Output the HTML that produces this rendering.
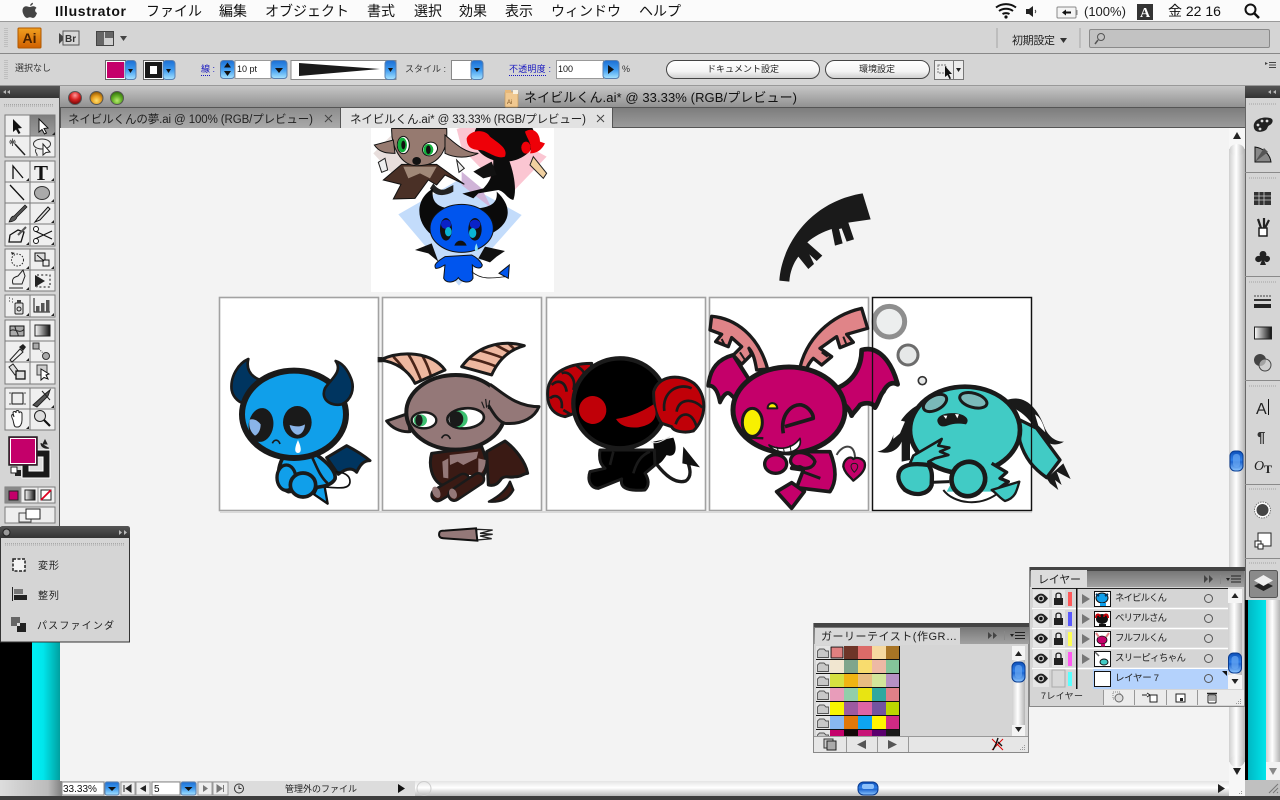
<!DOCTYPE html>
<html><head><meta charset="utf-8"><title>Illustrator</title>
<style>
html,body{margin:0;padding:0;background:#3a3a3a;width:1280px;height:800px;overflow:hidden}
svg{display:block;position:absolute;left:0;top:0}
text{font-family:"Liberation Sans","Noto Sans CJK JP",sans-serif;fill:#222}
.m{font-size:14px;fill:#111}
.s{font-size:9px;fill:#333}
.b{font-size:10px;fill:#222}
.l{font-size:9.5px;fill:#222}
.tool{fill:#efefef;stroke:#7a7a7a;stroke-width:1}
</style></head><body>
<svg width="1280" height="800" viewBox="0 0 1280 800" xmlns="http://www.w3.org/2000/svg">
<defs>
<linearGradient id="title" x1="0" y1="0" x2="0" y2="1"><stop offset="0" stop-color="#c6c6c6"/><stop offset="1" stop-color="#8f8f8f"/></linearGradient>
<linearGradient id="tabg" x1="0" y1="0" x2="0" y2="1"><stop offset="0" stop-color="#7d7d7d"/><stop offset="1" stop-color="#9c9c9c"/></linearGradient>
<linearGradient id="tabin" x1="0" y1="0" x2="0" y2="1"><stop offset="0" stop-color="#8d8d8d"/><stop offset="1" stop-color="#aaa"/></linearGradient>
<linearGradient id="dark" x1="0" y1="0" x2="0" y2="1"><stop offset="0" stop-color="#555"/><stop offset="1" stop-color="#333"/></linearGradient>
<linearGradient id="blue" x1="0" y1="0" x2="0" y2="1"><stop offset="0" stop-color="#1c6fd4"/><stop offset=".5" stop-color="#3f9bf0"/><stop offset="1" stop-color="#a8e4ff"/></linearGradient>
<linearGradient id="knob" x1="0" y1="0" x2="0" y2="1"><stop offset="0" stop-color="#0c4fb8"/><stop offset=".45" stop-color="#2f7fe8"/><stop offset=".55" stop-color="#1e66d0"/><stop offset="1" stop-color="#8cc6ff"/></linearGradient>
<linearGradient id="sv" x1="0" y1="0" x2="1" y2="0"><stop offset="0" stop-color="#cfcfcf"/><stop offset=".45" stop-color="#fff"/><stop offset="1" stop-color="#b4b4b4"/></linearGradient>
<linearGradient id="sh" x1="0" y1="0" x2="0" y2="1"><stop offset="0" stop-color="#e4e4e4"/><stop offset=".45" stop-color="#fff"/><stop offset="1" stop-color="#bbb"/></linearGradient>
<linearGradient id="cy" x1="0" y1="0" x2="1" y2="0"><stop offset="0" stop-color="#00f0f4"/><stop offset=".4" stop-color="#00e6ec"/><stop offset="1" stop-color="#00a0a0"/></linearGradient>
<linearGradient id="cy2" x1="0" y1="0" x2="1" y2="0"><stop offset="0" stop-color="#00b8c4"/><stop offset="1" stop-color="#00e4ea"/></linearGradient>
<linearGradient id="st" x1="0" y1="0" x2="1" y2="0"><stop offset="0" stop-color="#ddd"/><stop offset=".8" stop-color="#bbb"/><stop offset="1" stop-color="#888"/></linearGradient>
<linearGradient id="gr" x1="0" y1="0" x2="1" y2="0"><stop offset="0" stop-color="#fff"/><stop offset="1" stop-color="#111"/></linearGradient>
<linearGradient id="pill" x1="0" y1="0" x2="0" y2="1"><stop offset="0" stop-color="#fff"/><stop offset=".6" stop-color="#f4f4f4"/><stop offset="1" stop-color="#cfcfcf"/></linearGradient>
<linearGradient id="aig" x1="0" y1="0" x2="0" y2="1"><stop offset="0" stop-color="#f0a020"/><stop offset="1" stop-color="#d06000"/></linearGradient>
<linearGradient id="lay" x1="0" y1="0" x2="0" y2="1"><stop offset="0" stop-color="#777"/><stop offset="1" stop-color="#a2a2a2"/></linearGradient>
<radialGradient id="red" cx=".5" cy=".3" r=".7"><stop offset="0" stop-color="#ff9a9a"/><stop offset=".5" stop-color="#d82020"/><stop offset="1" stop-color="#6a0808"/></radialGradient>
<radialGradient id="org" cx=".5" cy=".7" r=".7"><stop offset="0" stop-color="#ffe070"/><stop offset=".5" stop-color="#e8a020"/><stop offset="1" stop-color="#885000"/></radialGradient>
<radialGradient id="grn" cx=".5" cy=".7" r=".7"><stop offset="0" stop-color="#b8ec70"/><stop offset=".5" stop-color="#64b028"/><stop offset="1" stop-color="#2c6808"/></radialGradient>
<clipPath id="sw"><rect x="816" y="646" width="196" height="91"/></clipPath>
<clipPath id="thumb"><rect x="371" y="128" width="183" height="164"/></clipPath>
<clipPath id="hl"><path d="M495,195 C560,165 650,170 690,225 L600,265 C580,225 540,200 495,195Z"/></clipPath>
<clipPath id="hr"><path d="M740,215 C780,160 850,130 928,152 C880,165 850,195 830,240Z"/></clipPath>
</defs>

<rect width="1280" height="800" fill="#3a3a3a"/>
<rect x="60" y="128" width="1185" height="653" fill="#f3f3f3"/>

<!-- thumbnail art -->
<g clip-path="url(#thumb)">
<rect x="371" y="128" width="183" height="164" fill="#fff"/>
<g transform="translate(365,125) scale(.3333)">
 <polygon points="25,85 95,15 210,130 140,210" fill="#e8dedc"/>
 <polygon points="275,12 350,-10 545,95 430,215 290,70" fill="#fbc6d2"/>
 <polygon points="100,268 280,165 470,270 282,482" fill="#c3dcfb"/>
 <polygon points="290,140 350,190 380,250 290,180" fill="#d0b4d8"/>
 <!-- goat -->
 <path d="M55,165 L110,118 L215,118 L298,178 L240,150 L215,180 L190,165 L150,220 L85,222 L108,178Z" fill="#4a3026" stroke="#111" stroke-width="3"/>
 <path d="M115,125 L130,160 L165,145 L195,160 L215,125Z" fill="#a08878"/>
 <path d="M40,112 L60,100 L68,135 L50,142Z M275,105 L298,130 L282,142Z" fill="#eee" stroke="#222" stroke-width="3"/>
 <path d="M80,10 C78,60 105,125 160,122 C215,122 250,85 245,10Z" fill="#967a70" stroke="#111" stroke-width="3"/>
 <path d="M85,45 L28,60 C45,85 70,85 90,85Z" fill="#967a70" stroke="#111" stroke-width="3"/>
 <path d="M240,30 C270,55 300,85 340,85 C310,100 270,100 240,85Z" fill="#967a70" stroke="#111" stroke-width="3"/>
 <ellipse cx="115" cy="60" rx="18" ry="26" fill="#fff" stroke="#111" stroke-width="3"/>
 <ellipse cx="112" cy="60" rx="14" ry="22" fill="#12b03c"/><ellipse cx="115" cy="60" rx="6" ry="13" fill="#111"/>
 <ellipse cx="195" cy="72" rx="23" ry="20" fill="#fff" stroke="#111" stroke-width="3" transform="rotate(-25 195 72)"/>
 <ellipse cx="190" cy="74" rx="15" ry="17" fill="#12b03c"/><ellipse cx="190" cy="74" rx="7" ry="13" fill="#111"/>
 <ellipse cx="155" cy="108" rx="13" ry="12" fill="#111"/>
 <path d="M195,190 C210,215 240,215 265,200 L265,180 L245,190 C230,200 215,190 205,175Z" fill="#222"/>
 <!-- belial -->
 <ellipse cx="418" cy="38" rx="92" ry="72" fill="#0c0c0c"/>
 <path d="M385,100 C385,130 385,160 355,190 L292,206 L325,220 L340,205 L400,195 C420,200 425,220 445,225 C455,200 450,150 430,100Z" fill="#0c0c0c"/>
 <path d="M325,140 L380,110 L395,150 L355,160Z" fill="#111"/>
 <path d="M305,40 C315,15 360,10 375,35 C400,55 430,70 420,95 C395,105 365,75 345,75 C320,75 305,65 305,40Z" fill="#ee0008"/>
 <path d="M480,20 C500,5 525,20 525,50 L540,55 C530,75 515,85 495,85 C505,60 485,40 480,20Z" fill="#ee0008"/>
 <ellipse cx="483" cy="68" rx="14" ry="18" fill="#ee0008"/>
 <path d="M505,95 L545,145 L535,160 L495,120Z" fill="#f0d0a0" stroke="#222" stroke-width="3"/>
 <!-- blue -->
 <path d="M205,190 C150,220 150,290 200,330 L370,330 C440,300 445,245 395,200 C400,240 370,255 280,250 C220,255 195,230 205,190Z" fill="#0a0a0a"/>
 <path d="M150,375 L200,355 L220,410 L190,385Z M360,365 L420,378 L395,395 L375,412 L340,400Z" fill="#111"/>
 <path d="M240,395 C215,410 205,420 212,430 C225,432 235,420 240,420 L236,460 C245,478 270,472 280,458 C290,472 315,478 324,460 L322,420 C335,432 350,432 352,420 C345,405 330,395 320,390Z" fill="#0055ee" stroke="#111" stroke-width="3"/>
 <ellipse cx="290" cy="310" rx="95" ry="72" fill="#0055ee" stroke="#111" stroke-width="3"/>
 <ellipse cx="243" cy="313" rx="18" ry="34" fill="#111"/><ellipse cx="330" cy="313" rx="20" ry="34" fill="#111"/>
 <ellipse cx="243" cy="298" rx="15" ry="14" fill="#0a22c8"/><ellipse cx="330" cy="298" rx="16" ry="14" fill="#0a22c8"/>
 <ellipse cx="250" cy="320" rx="10" ry="14" fill="#09b4d4"/><ellipse cx="323" cy="324" rx="11" ry="15" fill="#09b4d4"/>
 <path d="M268,362 C275,342 298,342 305,362Z" fill="#111"/>
 <path d="M334,355 C328,368 328,378 334,378 C340,378 340,368 334,355Z" fill="#8ee0f0"/>
 <path d="M320,440 C350,465 380,460 420,455" fill="none" stroke="#111" stroke-width="2.5"/>
 <path d="M402,445 L433,420 L430,460Z" fill="#0055ee" stroke="#111" stroke-width="3"/>
</g>
</g>

<!-- artboards -->
<g fill="#fff" stroke="#a2a2a2" stroke-width="1.6">
<rect x="219.5" y="297.5" width="159" height="213"/>
<rect x="382.5" y="297.5" width="159" height="213"/>
<rect x="546.5" y="297.5" width="159" height="213"/>
<rect x="709.5" y="297.5" width="159" height="213"/>
<rect x="872.5" y="297.5" width="159" height="213"/>
</g>
<rect x="220" y="511" width="812" height="2" fill="#d8d8d8"/>

<!-- arch -->
<g transform="translate(770,185) scale(.3333)"><path d="M28,287 C35,180 120,50 278,25 L302,103 L235,113 L252,163 L230,170 L215,130 L207,132 L218,175 L195,182 L185,132 C160,140 130,155 112,172 L157,212 L140,228 L118,208 L132,237 L115,252 L85,215 C70,235 60,260 58,290Z" fill="#1a1a1a"/></g>

<!-- char 1 -->
<g transform="translate(215,295) scale(.3333)" stroke-linejoin="round">
 <path d="M335,488 L395,452 C420,465 445,480 465,497 C445,497 435,510 425,532 C410,515 390,522 370,538Z" fill="#003560" stroke="#1a1a1a" stroke-width="9"/>
 <path d="M310,575 C350,575 405,590 405,560 C405,535 375,530 355,530" fill="none" stroke="#111" stroke-width="5"/>
 <path d="M297,598 L338,626 L328,570 L308,575Z" fill="#109fea" stroke="#111" stroke-width="7"/>
 <path d="M205,485 L305,480 C335,500 365,530 360,552 C350,572 320,575 300,578 L220,590 C190,580 180,530 205,485Z" fill="#109fea" stroke="#1a1a1a" stroke-width="11"/>
 <path d="M292,488 C305,515 315,545 338,565" fill="none" stroke="#1a1a1a" stroke-width="8"/>
 <ellipse cx="214" cy="548" rx="28" ry="38" fill="#109fea" stroke="#1a1a1a" stroke-width="10"/>
 <ellipse cx="264" cy="570" rx="38" ry="36" fill="#109fea" stroke="#1a1a1a" stroke-width="11"/>
 <path d="M100,192 C70,205 45,245 50,285 C55,310 75,325 90,325 L135,255 C110,245 92,225 100,192Z" fill="#003560" stroke="#1a1a1a" stroke-width="8"/>
 <ellipse cx="237" cy="358" rx="156" ry="131" fill="#109fea" stroke="#1a1a1a" stroke-width="18"/>
 <path d="M362,198 C385,230 345,255 330,280 C315,315 350,335 380,328 C410,315 420,280 408,250 C398,225 385,205 362,198Z" fill="#003560" stroke="#1a1a1a" stroke-width="8"/>
 <ellipse cx="138" cy="390" rx="37" ry="51" transform="rotate(8 138 390)" fill="#1a1a1a"/>
 <ellipse cx="247" cy="382" rx="43" ry="49" fill="#1a1a1a"/>
 <path d="M104,374 C114,370 128,376 137,388 C137,405 130,417 120,422 C106,412 100,392 104,374Z" fill="#8ab4e8"/>
 <path d="M224,390 C240,394 252,398 270,388 C269,408 257,421 245,419 C233,414 226,402 224,390Z" fill="#8ab4e8"/>
 <path d="M172,445 C178,432 190,432 195,447" fill="none" stroke="#1a1a1a" stroke-width="5"/>
 <path d="M249,435 C240,455 236,473 249,474 C262,473 258,455 249,435Z" fill="#fff"/>
</g>

<!-- char 2 -->
<g transform="translate(215,295) scale(.3333)" stroke-linejoin="round">
 <rect x="488" y="186" width="14" height="16" fill="#222"/>
 <path d="M815,470 L870,438 C900,460 932,500 938,535 C925,535 915,548 900,545 C885,550 875,540 860,550 C850,565 840,575 820,570Z" fill="#3a1a14" stroke="#1a1a1a" stroke-width="9"/>
 <path d="M885,560 C875,585 850,605 822,620 C860,622 880,612 895,585Z" fill="#3a1a14" stroke="#1a1a1a" stroke-width="7"/>
 <path d="M650,475 C640,510 650,555 680,570 L790,560 C825,530 815,490 800,455Z" fill="#3a1a14" stroke="#1a1a1a" stroke-width="9"/>
 <path d="M682,500 L700,490 L700,550 L685,548Z M790,490 L812,495 C812,520 800,535 790,540Z" fill="#947878"/>
 <path d="M704,480 L790,470 L785,490 L765,500 L745,510 L728,500 L705,510Z" fill="#947878"/>
 <path d="M762,542 L812,548 M765,560 L812,560 M762,578 L800,565" stroke="#fff" stroke-width="5"/>
 <path d="M668,600 L745,555" stroke="#1a1a1a" stroke-width="44" stroke-linecap="round"/>
 <path d="M668,600 L745,555" stroke="#3a1a14" stroke-width="29" stroke-linecap="round"/>
 <path d="M718,600 L790,552" stroke="#1a1a1a" stroke-width="42" stroke-linecap="round"/>
 <path d="M718,600 L790,552" stroke="#3a1a14" stroke-width="27" stroke-linecap="round"/>
 <ellipse cx="664" cy="592" rx="11" ry="18" fill="#947878" transform="rotate(-25 664 592)"/><ellipse cx="714" cy="596" rx="11" ry="16" fill="#947878" transform="rotate(-25 714 596)"/>
 <path d="M495,195 C560,165 650,170 690,225 L600,265 C580,225 540,200 495,195Z" fill="#eeb8a0"/>
 <g clip-path="url(#hl)"><path d="M535,185 C550,200 570,225 585,250 M575,170 C595,200 605,225 620,260 M615,170 C630,195 640,215 650,250" fill="none" stroke="#4a2418" stroke-width="8"/></g>
 <path d="M495,195 C560,165 650,170 690,225 L600,265 C580,225 540,200 495,195Z" fill="none" stroke="#1a1a1a" stroke-width="9"/>
 <path d="M740,215 C780,160 850,130 928,152 C880,165 850,195 830,240Z" fill="#eeb8a0"/>
 <g clip-path="url(#hr)"><path d="M760,190 C790,195 820,205 845,215 M790,165 C815,172 845,180 870,192 M835,145 C850,155 870,165 890,175 M880,145 C885,150 895,158 900,165" fill="none" stroke="#4a2418" stroke-width="8"/></g>
 <path d="M740,215 C780,160 850,130 928,152 C880,165 850,195 830,240Z" fill="none" stroke="#1a1a1a" stroke-width="9"/>
 <path d="M515,378 L578,356 L585,410 C555,412 530,398 515,378Z" fill="#947878" stroke="#1a1a1a" stroke-width="9"/>
 <ellipse cx="722" cy="352" rx="148" ry="112" fill="#947878" stroke="#1a1a1a" stroke-width="12"/>
 <path d="M825,268 C860,290 900,335 972,335 C960,365 925,390 870,385 C850,380 835,355 820,330" fill="#947878" stroke="#1a1a1a" stroke-width="9"/>
 <path d="M800,320 L808,340 M812,312 L815,338 M824,316 L820,342" stroke="#1a1a1a" stroke-width="3.5"/>
 <ellipse cx="627" cy="376" rx="37" ry="24" fill="#fff" stroke="#1a1a1a" stroke-width="7"/>
 <ellipse cx="616" cy="376" rx="20" ry="18" fill="#3cc070"/><ellipse cx="612" cy="376" rx="11" ry="17" fill="#1a1a1a"/>
 <ellipse cx="752" cy="370" rx="55" ry="30" transform="rotate(-5 752 370)" fill="#fff" stroke="#1a1a1a" stroke-width="8"/>
 <ellipse cx="734" cy="372" rx="24" ry="25" fill="#3cc070"/><ellipse cx="724" cy="372" rx="21" ry="23" fill="#1a1a1a"/>
 <path d="M680,430 C686,416 700,416 706,432" fill="none" stroke="#1a1a1a" stroke-width="5"/>
</g>

<!-- char 3 -->
<g transform="translate(545,295) scale(.3333)" stroke-linejoin="round">
 <path d="M335,508 C360,540 390,568 422,558 C442,545 435,520 428,500" fill="none" stroke="#1a1a1a" stroke-width="10"/>
 <path d="M415,455 L465,517 L412,505Z" fill="#111"/>
 <path d="M325,440 L385,428 C400,465 390,490 365,480 C355,495 345,510 330,510Z" fill="#0a0a0a"/>
 <path d="M165,465 C160,500 170,510 180,520 L135,530 C125,560 140,580 160,580 L230,552 C225,575 240,590 300,585 C315,570 310,550 300,535 L330,510 L328,465Z" fill="#000" stroke="#1a1a1a" stroke-width="9"/>
 <path d="M195,510 L205,470 M265,535 C275,500 290,480 315,470" fill="none" stroke="#1a1a1a" stroke-width="8"/>
 <path d="M8,300 C5,240 60,205 140,205 L130,340 L60,365 C30,360 8,340 8,300Z" fill="#c00008" stroke="#1a1a1a" stroke-width="9"/>
 <path d="M20,270 C35,255 60,255 65,290 M15,310 C30,295 55,305 50,340 M50,235 C70,225 95,250 85,285 M95,212 C105,220 115,225 120,240 M55,345 L80,360" fill="none" stroke="#1a1a1a" stroke-width="8"/>
 <ellipse cx="225" cy="325" rx="140" ry="135" fill="#000" stroke="#1a1a1a" stroke-width="13"/>
 <path d="M326,290 C340,240 405,235 447,265 C488,300 485,370 445,408 C420,415 385,410 380,395 L350,385 C330,360 325,320 326,290Z" fill="#c00008" stroke="#1a1a1a" stroke-width="9"/>
 <path d="M358,348 C350,290 400,262 440,280 M395,350 C400,310 445,308 472,338 M392,388 C405,345 445,350 455,398" fill="none" stroke="#1a1a1a" stroke-width="8"/>
 <ellipse cx="143" cy="345" rx="41" ry="42" transform="rotate(-15 143 345)" fill="#c00008"/>
 <path d="M213,372 C260,365 300,345 325,328 C340,360 332,388 280,397 C248,400 225,392 213,372Z" fill="#c00008"/>
 <path d="M318,440 C335,450 355,435 375,425" fill="none" stroke="#ddd" stroke-width="3"/>
</g>

<!-- char 4 -->
<g transform="translate(545,295) scale(.3333)" stroke-linejoin="round">
 <path d="M860,285 C930,265 950,210 950,165 C1000,150 1040,200 1058,268 C1040,258 1025,270 1015,290 C1005,300 1002,320 990,338 C985,322 960,322 945,330 C935,345 925,352 920,362 C915,345 905,330 878,315Z" fill="#c4006a" stroke="#1a1a1a" stroke-width="14"/>
 <path d="M490,272 C495,220 520,192 565,180 L615,258 L585,325 C560,305 555,290 545,295 C535,300 530,312 525,322 C520,295 510,270 490,272Z" fill="#c4006a" stroke="#1a1a1a" stroke-width="12"/>
 <path d="M500,64 C570,70 640,120 668,222 L635,225 C630,195 625,175 612,160 L620,178 L590,208 L565,180 L590,155 L560,128 L550,155 L512,140 L530,118 L495,105Z" fill="#e08488" stroke="#1a1a1a" stroke-width="10"/>
 <path d="M950,40 L968,100 L905,118 L925,142 L885,158 L875,125 C860,135 840,150 825,160 L860,185 L830,210 L805,190 C790,205 785,220 780,232 L762,232 C780,130 860,60 950,40Z" fill="#e08488" stroke="#1a1a1a" stroke-width="10"/>
 <path d="M530,132 L540,152 M585,172 L600,195 M895,125 L905,150 M830,172 L848,185" stroke="#1a1a1a" stroke-width="6"/>
 <path d="M770,470 L855,470 C875,520 875,560 855,590 L755,578 L775,525 L740,520Z" fill="#c4006a" stroke="#1a1a1a" stroke-width="11"/>
 <path d="M772,530 L826,550" stroke="#1a1a1a" stroke-width="9"/>
 <ellipse cx="732" cy="345" rx="168" ry="129" fill="#c4006a" stroke="#1a1a1a" stroke-width="15"/>
 <ellipse cx="622" cy="382" rx="30" ry="42" fill="#f8f000" stroke="#1a1a1a" stroke-width="9"/>
 <path d="M595,425 C615,430 635,428 655,430" fill="none" stroke="#1a1a1a" stroke-width="7"/>
 <path d="M668,340 C668,320 695,318 697,340Z" fill="#f8f000" stroke="#1a1a1a" stroke-width="6"/>
 <path d="M715,415 C705,360 740,325 770,330 C790,335 805,355 805,370 L720,395" fill="#c4006a" stroke="#1a1a1a" stroke-width="11"/>
 <path d="M672,450 C700,465 740,465 765,430 C772,460 745,475 715,472 C695,470 680,462 672,450Z" fill="#fff" stroke="#1a1a1a" stroke-width="5"/>
 <path d="M695,455 L700,468 M715,458 L718,472 M735,450 L738,468" stroke="#1a1a1a" stroke-width="3"/>
 <path d="M875,480 C890,450 930,440 930,490" fill="none" stroke="#444" stroke-width="6"/>
 <path d="M925,492 C915,480 895,495 895,515 C900,535 915,545 925,557 C940,545 960,530 960,510 C960,490 935,485 925,492Z" fill="#c4006a" stroke="#1a1a1a" stroke-width="7"/>
 <path d="M928,505 C918,505 912,515 928,532 C945,515 938,505 928,505Z" fill="#c4006a" stroke="#1a1a1a" stroke-width="3"/>
 <path d="M695,590 L740,563 L778,590 L740,640Z" fill="#c4006a" stroke="#1a1a1a" stroke-width="11"/>
 <ellipse cx="692" cy="507" rx="33" ry="28" fill="#c4006a" stroke="#1a1a1a" stroke-width="10"/>
 <path d="M745,480 C760,465 800,475 810,500 C805,520 780,525 765,515 C745,520 725,500 745,480Z" fill="#c4006a" stroke="#1a1a1a" stroke-width="10"/>
</g>

<!-- char 5 -->
<g transform="translate(860,295) scale(.3333)" stroke-linejoin="round">
 <circle cx="88" cy="80" r="46" fill="#eceeee" stroke="#8e8e8e" stroke-width="15"/>
 <circle cx="144" cy="180" r="30" fill="#e6e8e8" stroke="#6c6c6c" stroke-width="9"/>
 <circle cx="187" cy="257" r="12" fill="#e6e8e8" stroke="#333" stroke-width="5"/>
 <path d="M470,370 L530,400 L600,495 L560,548 C520,520 495,490 480,440Z" fill="#41cbc5" stroke="#1a1a1a" stroke-width="10"/>
 <path d="M440,315 C500,295 535,345 555,400 C570,430 590,440 612,440 C590,455 560,450 545,425 L515,385 C500,365 480,345 440,330Z" fill="#1a1a1a"/>
 <path d="M525,358 C540,365 550,385 556,412 L535,392Z" fill="#fff"/>
 <path d="M560,550 L570,565 L595,585 L585,555 L605,570 L590,530 L632,552 L610,505Z" fill="#1a1a1a"/>
 <path d="M185,325 C145,340 115,380 100,420 C90,450 75,465 52,470 C90,480 115,465 125,440 L125,500 L150,495 L150,400Z" fill="#1a1a1a"/>
 <path d="M115,375 C105,395 98,415 100,432 L120,415 L135,380Z" fill="#fff"/>
 <path d="M250,585 C280,625 360,640 420,590" fill="none" stroke="#1a1a1a" stroke-width="6"/>
 <ellipse cx="315" cy="405" rx="165" ry="130" fill="#41cbc5" stroke="#1a1a1a" stroke-width="14"/>
 <path d="M395,505 L440,532 L420,550 L445,560 L400,590 L260,590 L300,515Z" fill="#41cbc5" stroke="none"/>
 <path d="M395,505 L440,532 L420,550 L445,560 L410,585" fill="none" stroke="#1a1a1a" stroke-width="10"/>
 <path d="M160,482 L245,432 L235,452 L268,458 L240,470 L265,480 L225,490 L205,500 L208,515 L150,505Z" fill="#41cbc5" stroke="#1a1a1a" stroke-width="8"/>
 <path d="M118,530 C130,505 170,505 205,510 C220,530 215,550 215,570 C205,600 165,605 135,585 C120,570 110,550 118,530Z" fill="#41cbc5" stroke="#1a1a1a" stroke-width="13"/>
 <path d="M212,562 L268,560" stroke="#1a1a1a" stroke-width="9"/>
 <ellipse cx="325" cy="552" rx="50" ry="52" transform="rotate(30 325 552)" fill="#41cbc5" stroke="#1a1a1a" stroke-width="14"/>
 <path d="M395,585 L478,560 C470,590 465,610 435,618 C420,610 410,595 395,585Z" fill="#41cbc5" stroke="#1a1a1a" stroke-width="7"/>
 <ellipse cx="225" cy="324" rx="38" ry="21" transform="rotate(-28 225 324)" fill="#7ab9b9" stroke="#1a1a1a" stroke-width="9"/>
 <ellipse cx="340" cy="316" rx="42" ry="21" transform="rotate(16 340 316)" fill="#7ab9b9" stroke="#1a1a1a" stroke-width="9"/>
 <path d="M232,378 C232,360 260,352 290,355 C320,360 330,375 318,388 C295,385 280,385 262,392 C245,398 235,392 232,378Z" fill="#1a1a1a"/>
 <path d="M250,362 L258,372 L262,362Z M285,357 L292,370 L297,358Z" fill="#fff"/>
</g>
<rect x="872.5" y="297.5" width="159" height="213" fill="none" stroke="#111" stroke-width="1.3"/>

<!-- small brush -->
<g transform="translate(430,520) scale(.3333)">
 <path d="M140,28 L188,30 L150,40 L188,43 L150,48 L185,56 L140,60Z" fill="#fff" stroke="#222" stroke-width="4"/>
 <path d="M28,38 C30,32 35,32 45,32 L138,25 L142,62 L45,55 C30,55 25,50 28,38Z" fill="#947878" stroke="#111" stroke-width="6"/>
</g>

<!-- menu bar -->
<rect width="1280" height="22" fill="#fbfbfb"/>
<rect y="21" width="1280" height="1" fill="#9a9a9a"/>
<path d="M30,5.5 C30.5,4 31.5,3 33,2.8 C33,4.3 32,5.6 30.5,5.8Z M26,6.3 C27.5,6.3 28.5,7 29.8,7 C31,7 32,6.2 33.5,6.3 C35,6.4 36,7.2 36.5,8 C34.5,9.2 34.7,12 37,13 C36.3,15.2 35,17.8 33.3,17.9 C32,18 31.5,17.2 30,17.2 C28.5,17.2 28,17.9 26.8,17.9 C25,17.9 22.5,13.5 22.5,10.8 C22.5,8 24,6.4 26,6.3Z" fill="#444"/>
<text x="55" y="16" style="font-size:14px;font-weight:bold;fill:#111" textLength="71" lengthAdjust="spacing">Illustrator</text>
<text class="m" x="146" y="16">ファイル</text>
<text class="m" x="219" y="16">編集</text>
<text class="m" x="265" y="16" textLength="84">オブジェクト</text>
<text class="m" x="367" y="16">書式</text>
<text class="m" x="414" y="16">選択</text>
<text class="m" x="459" y="16">効果</text>
<text class="m" x="505" y="16">表示</text>
<text class="m" x="551" y="16" textLength="70">ウィンドウ</text>
<text class="m" x="639" y="16">ヘルプ</text>
<g fill="none" stroke="#111" stroke-width="2">
 <path d="M996,7.5 C1002,3 1010,3 1016,7.5"/><path d="M999,11 C1003,8 1009,8 1013,11"/><path d="M1002.5,14 C1004.5,12.8 1007.5,12.8 1009.5,14"/>
</g>
<circle cx="1006" cy="17" r="1.6" fill="#111"/>
<path d="M1026,9 L1029,9 L1033,6 L1033,17 L1029,14 L1026,14Z" fill="#222"/><path d="M1035,10 C1036,11 1036,12 1035,13" fill="none" stroke="#444"/>
<rect x="1057" y="7" width="19" height="11" rx="1" fill="#f4f4f4" stroke="#888"/><rect x="1076" y="10" width="1.5" height="5" fill="#888"/>
<path d="M1062,12.5 L1066,9.5 V11.5 H1071 V13.5 H1066 V15.5Z" fill="#111"/>
<text x="1084" y="16" style="font-size:13px;fill:#222">(100%)</text>
<rect x="1137" y="4" width="16" height="16" fill="#333"/>
<text x="1140" y="17" style="font-size:14px;font-weight:bold;font-family:'Liberation Serif';fill:#fff">A</text>
<text class="m" x="1168" y="16">金 22 16</text>
<circle cx="1250.5" cy="9.5" r="5" fill="none" stroke="#111" stroke-width="2"/><path d="M1254,13 L1259,18" stroke="#111" stroke-width="2.5"/>

<!-- app bar -->
<rect y="22" width="1280" height="32" fill="#d5d5d5"/>
<rect y="53" width="1280" height="1" fill="#888"/>
<rect y="54" width="1280" height="32" fill="#d5d5d5"/>
<rect y="85" width="1280" height="1" fill="#999"/>
<g fill="none" stroke="#a8a8a8" stroke-dasharray="1 1"><path d="M5,28 V48 M7,28 V48 M5,60 V80 M7,60 V80"/></g>
<rect x="18" y="28" width="23" height="20" rx="1" fill="url(#aig)" stroke="#b05800"/>
<text x="22.5" y="43" style="font-size:14px;font-weight:bold;fill:#4a2200">Ai</text>
<path d="M59,33 L65,38 L59,44Z" fill="#444"/>
<rect x="63" y="31" width="16" height="14" fill="#d8d8d8" stroke="#555"/>
<text x="65" y="42" style="font-size:10px;font-weight:bold;fill:#333">Br</text>
<rect x="96.5" y="31.5" width="17" height="14" fill="#d0d0d0" stroke="#444"/><rect x="97" y="32" width="7" height="13" fill="#666"/><rect x="105" y="32" width="8" height="6" fill="#666"/>
<path d="M120,36 H127 L123.5,41Z" fill="#444"/>
<path d="M997,28 V48 M1080,28 V48" stroke="#a5a5a5"/>
<text class="b" x="1012" y="44" style="font-size:11px" textLength="43">初期設定</text>
<path d="M1060,38 H1067 L1063.5,43Z" fill="#333"/>
<rect x="1089.5" y="29.5" width="180" height="18" rx="1.5" fill="#c2c2c2" stroke="#8a8a8a"/>
<circle cx="1101" cy="37" r="3.5" fill="none" stroke="#555"/><path d="M1098,40 L1095,44" stroke="#555" stroke-width="1.5"/>

<!-- control bar -->
<text class="s" x="15" y="71" textLength="36">選択なし</text>
<rect x="105.5" y="60.5" width="20" height="19" fill="#fff" stroke="#666"/><rect x="107" y="62" width="17" height="16" fill="#c4006a"/>
<rect x="125" y="60.5" width="11" height="19" rx="3" fill="url(#blue)" stroke="#5a80b0"/><path d="M128,69 H133 L130.5,73Z" fill="#111"/>
<rect x="143.5" y="60.5" width="20" height="19" fill="#fff" stroke="#666"/><rect x="145" y="62" width="17" height="16" fill="#1a1a1a"/><rect x="150" y="66" width="7" height="8" fill="#fff"/>
<rect x="163" y="60.5" width="12" height="19" rx="3" fill="url(#blue)" stroke="#5a80b0"/><path d="M166,69 H171 L168.5,73Z" fill="#111"/>
<text class="s" x="201" y="72" style="fill:#1818c0">線 :</text><path d="M201,75.5 H210" stroke="#1818c0" stroke-dasharray="1 1"/>
<rect x="220.5" y="60.5" width="14" height="18" rx="3" fill="url(#blue)" stroke="#5a80b0"/><path d="M227.5,62.5 L231,67.5 H224Z M227.5,76 L231,71 H224Z" fill="#111"/>
<rect x="235" y="60.5" width="36" height="18" fill="#fff" stroke="#999"/><text class="s" x="237" y="72" style="fill:#111">10 pt</text>
<rect x="271" y="60.5" width="16" height="18" rx="3" fill="url(#blue)" stroke="#5a80b0"/><path d="M275,68 H283 L279,73Z" fill="#111"/>
<rect x="291" y="60.5" width="105" height="19" fill="#fff" stroke="#888"/>
<path d="M299,63 L380,69 L299,76Z" fill="#1a1a1a"/>
<rect x="385" y="60.5" width="11" height="19" rx="3" fill="url(#blue)" stroke="#5a80b0"/><path d="M388,68 H393 L390.5,72Z" fill="#111"/>
<text class="s" x="405" y="72" textLength="41">スタイル :</text>
<rect x="451.5" y="60.5" width="20" height="19" fill="#fff" stroke="#888"/>
<rect x="471" y="60.5" width="12" height="19" rx="3" fill="url(#blue)" stroke="#5a80b0"/><path d="M474,68 H480 L477,72Z" fill="#111"/>
<text class="s" x="509" y="72" style="fill:#1818c0" textLength="42">不透明度 :</text><path d="M509,75.5 H547" stroke="#1818c0" stroke-dasharray="1 1"/>
<rect x="556.5" y="60.5" width="47" height="18" fill="#fff" stroke="#999"/><text class="s" x="558" y="72" style="fill:#111">100</text>
<rect x="603" y="60.5" width="16" height="18" rx="3" fill="url(#blue)" stroke="#5a80b0"/><path d="M608,65 L614,69.5 L608,74Z" fill="#111"/>
<text class="s" x="622" y="72">%</text>
<rect x="666.5" y="60.5" width="153" height="18" rx="9" fill="url(#pill)" stroke="#444"/>
<text class="s" x="707" y="72" textLength="72" style="fill:#222">ドキュメント設定</text>
<rect x="825.5" y="60.5" width="104" height="18" rx="9" fill="url(#pill)" stroke="#444"/>
<text class="s" x="859" y="72" textLength="36" style="fill:#222">環境設定</text>
<rect x="934.5" y="60.5" width="29" height="19" fill="#ececec" stroke="#777"/>
<path d="M953.5,60.5 V79.5" stroke="#777"/>
<rect x="938" y="65" width="8" height="8" fill="none" stroke="#777" stroke-dasharray="2 1"/>
<path d="M945,66 L945,77 L947.5,75 L949.5,79 L951,78.5 L949,74 L952,74Z" fill="#111"/>
<path d="M956,68 H961 L958.5,72Z" fill="#222"/>
<path d="M1265,62 L1268,63.5 L1265,65Z" fill="#444"/><path d="M1269,62.5 H1276 M1269,65 H1276 M1269,67.5 H1276" stroke="#444"/>

<!-- doc window title & tabs -->
<rect x="60" y="86" width="1185" height="22" fill="url(#title)"/>
<rect x="60" y="107" width="1185" height="1" fill="#555"/>
<rect x="60" y="108" width="1185" height="20" fill="url(#tabg)"/>
<rect x="60" y="127" width="1185" height="1" fill="#555"/>
<circle cx="75" cy="98" r="6.5" fill="url(#red)" stroke="#555"/>
<circle cx="96.5" cy="98" r="6.5" fill="url(#org)" stroke="#555"/>
<circle cx="117" cy="98" r="6.5" fill="url(#grn)" stroke="#555"/>
<rect x="505" y="92" width="13" height="15" rx="1" fill="#f0c890" stroke="#c49a60" stroke-width=".7"/><rect x="505" y="90" width="6" height="3" fill="#e8b878"/><rect x="513" y="90" width="5" height="4" fill="#f8f0e0"/>
<text x="507" y="104" style="font-size:6px;fill:#7a5020">Ai</text>
<text x="524" y="102" style="font-size:13px;fill:#111" textLength="273">ネイビルくん.ai* @ 33.33% (RGB/プレビュー)</text>
<rect x="60" y="108" width="281" height="20" fill="url(#tabin)"/>
<path d="M60.5,108 V128 M340.5,108 V128" stroke="#555"/>
<text x="68" y="123" style="font-size:11.5px;fill:#222" textLength="245">ネイビルくんの夢.ai @ 100% (RGB/プレビュー)</text>
<path d="M325,115 L332,122 M332,115 L325,122" stroke="#444"/>
<rect x="341" y="108" width="271" height="20" fill="#e2e2e2"/>
<rect x="612" y="108" width="1" height="20" fill="#555"/>
<text x="350" y="123" style="font-size:11.5px;fill:#222" textLength="236">ネイビルくん.ai* @ 33.33% (RGB/プレビュー)</text>
<path d="M597,115 L604,122 M604,115 L597,122" stroke="#444"/>

<!-- scrollbars -->
<rect x="1229" y="128" width="16" height="653" fill="url(#sv)"/>
<rect x="1229" y="128" width="16" height="21" fill="#f7f7f7"/><ellipse cx="1237" cy="150" rx="7.5" ry="6" fill="url(#sv)"/>
<path d="M1237,132 L1241,139 H1233Z" fill="#222"/>
<rect x="1229" y="762" width="16" height="19" fill="#f7f7f7"/><ellipse cx="1237" cy="761" rx="7.5" ry="6" fill="url(#sv)"/>
<path d="M1233,768 H1241 L1237,775Z" fill="#222"/>
<rect x="1230" y="451" width="13" height="20" rx="5" fill="url(#knob)" stroke="#0a3c90"/><rect x="1233" y="454" width="7" height="13" rx="3" fill="#6aa8f2" opacity=".7"/>
<rect x="60" y="781" width="1185" height="15" fill="url(#sh)"/>
<rect x="60" y="781" width="355" height="15" fill="#dcdcdc"/>
<rect x="60" y="781" width="2" height="15" fill="#888"/>
<rect x="1229" y="781" width="16" height="15" fill="#f7f7f7"/>
<path d="M1218,784 L1225,788.5 L1218,793Z" fill="#222"/>
<rect x="858" y="782" width="20" height="13" rx="5.5" fill="url(#knob)" stroke="#0a3c90"/><rect x="862" y="784" width="12" height="5" rx="2" fill="#8cc0fa"/>
<g fill="#999"><rect x="1241" y="791" width="1" height="1"/><rect x="1239" y="793" width="1" height="1"/><rect x="1241" y="793" width="1" height="1"/></g>
<rect x="0" y="796" width="1280" height="4" fill="#3e3e3e"/>

<!-- status -->
<rect x="62" y="782" width="42" height="13" fill="#fff" stroke="#888"/>
<text x="63" y="792" style="font-size:10px;fill:#111">33.33%</text>
<rect x="105" y="782" width="14" height="13" rx="2" fill="url(#blue)" stroke="#5a80b0"/><path d="M108,787 H116 L112,791Z" fill="#111"/>
<rect x="121" y="782" width="14" height="13" fill="#eee" stroke="#999"/><path d="M124,785 V792 M131,785 V792 L126,788.5Z" stroke="#222" fill="#222"/>
<rect x="136" y="782" width="14" height="13" fill="#eee" stroke="#999"/><path d="M146,785 V792 L140,788.5Z" fill="#222"/>
<rect x="152" y="782" width="28" height="13" fill="#fff" stroke="#888"/><text x="154" y="792" style="font-size:10px;fill:#111">5</text>
<rect x="181" y="782" width="15" height="13" rx="2" fill="url(#blue)" stroke="#5a80b0"/><path d="M184.5,787 H192.5 L188.5,791Z" fill="#111"/>
<rect x="198" y="782" width="14" height="13" fill="#eee" stroke="#999"/><path d="M203,785 V792 L208,788.5Z" fill="#777"/>
<rect x="213" y="782" width="15" height="13" fill="#eee" stroke="#999"/><path d="M217,785 V792 L222,788.5Z M223.5,785 V792" fill="#777" stroke="#777"/>
<circle cx="239" cy="788.5" r="4.5" fill="#ddd" stroke="#333"/><path d="M239,785.5 V788.5 H241.5" fill="none" stroke="#333"/>
<text class="s" x="285" y="792" textLength="72" style="fill:#222">管理外のファイル</text>
<path d="M398,784 L405,788.5 L398,793Z" fill="#111"/>
<ellipse cx="424" cy="788.5" rx="7" ry="7" fill="url(#sh)" stroke="#ccc"/>

<!-- left column -->
<rect x="0" y="86" width="59" height="441" fill="#d5d5d5"/>
<rect x="59" y="86" width="1" height="441" fill="#555"/>
<rect x="0" y="86" width="59" height="12" fill="url(#dark)"/>
<path d="M6,90 L3,92 L6,94Z M10,90 L7,92 L10,94Z" fill="#bbb"/>
<path d="M4,104.5 H54 M4,106 H54" stroke="#a4a4a4" stroke-dasharray="1 1"/>
<rect x="0" y="642" width="32" height="138" fill="#000"/>
<rect x="32" y="642" width="28" height="138" fill="url(#cy)"/>
<rect x="0" y="780" width="60" height="16" fill="url(#st)"/>

<!-- tool groups -->
<g class="tool">
<rect class="tool" x="5" y="115" width="25" height="21"/><rect x="30" y="115" width="25" height="21" fill="url(#tabg)" stroke="#7a7a7a"/>
<rect class="tool" x="5" y="136" width="25" height="21"/><rect class="tool" x="30" y="136" width="25" height="21"/>
<rect class="tool" x="5" y="161" width="25" height="21"/><rect class="tool" x="30" y="161" width="25" height="21"/>
<rect class="tool" x="5" y="182" width="25" height="21"/><rect class="tool" x="30" y="182" width="25" height="21"/>
<rect class="tool" x="5" y="203" width="25" height="21"/><rect class="tool" x="30" y="203" width="25" height="21"/>
<rect class="tool" x="5" y="224" width="25" height="22"/><rect class="tool" x="30" y="224" width="25" height="22"/>
<rect class="tool" x="5" y="249" width="25" height="21"/><rect class="tool" x="30" y="249" width="25" height="21"/>
<rect class="tool" x="5" y="270" width="25" height="21"/><rect class="tool" x="30" y="270" width="25" height="21"/>
<rect class="tool" x="5" y="295" width="25" height="22"/><rect class="tool" x="30" y="295" width="25" height="22"/>
<rect class="tool" x="5" y="320" width="25" height="21"/><rect class="tool" x="30" y="320" width="25" height="21"/>
<rect class="tool" x="5" y="341" width="25" height="21"/><rect class="tool" x="30" y="341" width="25" height="21"/>
<rect class="tool" x="5" y="362" width="25" height="22"/><rect class="tool" x="30" y="362" width="25" height="22"/>
<rect class="tool" x="5" y="388" width="25" height="21"/><rect class="tool" x="30" y="388" width="25" height="21"/>
<rect class="tool" x="5" y="409" width="25" height="21"/><rect class="tool" x="30" y="409" width="25" height="21"/>
</g>
<!-- tool icons -->
<path d="M13,119 V132 L16,129.5 L18.5,134 L20.5,133 L18,128.5 L22,128Z" fill="#111"/>
<path d="M39,119 V132 L42,129.5 L44.5,134 L46.5,133 L44,128.5 L48,128Z" fill="#fff" stroke="#111"/>
<path d="M15,144 L25,155" stroke="#222" stroke-width="1.5"/><path d="M9,142 H16 M12.5,138.5 V146 M10,140 L15,144 M15,140 L10,144" stroke="#555"/>
<ellipse cx="42" cy="144" rx="8.5" ry="5" fill="none" stroke="#333"/><path d="M36,149 C34,153 38,153 37,156" fill="none" stroke="#333"/><path d="M43,144 V155 L46,152.5 L50,152 Z" fill="#fff" stroke="#222"/>
<path d="M13,179 V166 L23,178" fill="none" stroke="#111" stroke-width="1.3"/>
<text x="34" y="180" style="font-size:21px;font-weight:bold;font-family:'Liberation Serif';fill:#111">T</text>
<path d="M10,185 L24,200" stroke="#111" stroke-width="1.3"/>
<ellipse cx="42" cy="193" rx="7.5" ry="6.5" fill="#aaa" stroke="#333"/>
<path d="M25,205 L14,216 C11,216 10,220 9,222 C13,222 16,220 17,217 L27,207Z" fill="#555" stroke="#111" stroke-width=".7"/>
<path d="M48,207 L38,218 L35,222 L40,220 L50,209Z" fill="#ddd" stroke="#111"/>
<path d="M10,235 L18,230 L24,232 L21,242 L9,242Z" fill="#eee" stroke="#111" stroke-width="1.3"/><path d="M18,235 L26,227" stroke="#555" stroke-width="2"/>
<path d="M35,231 L52,239 M35,239 L52,231" stroke="#111" stroke-width="1.2"/><circle cx="36" cy="229" r="2.5" fill="#fff" stroke="#111"/><circle cx="36" cy="241" r="2.5" fill="#fff" stroke="#111"/>
<circle cx="17.5" cy="260" r="6" fill="none" stroke="#222" stroke-dasharray="1.5 1.5"/><path d="M12,255 L11,252 L15,253Z" fill="#222"/>
<rect x="35" y="253" width="10" height="8" fill="#ddd" stroke="#111"/><rect x="43" y="260" width="6" height="6" fill="#eee" stroke="#111"/><path d="M37,255 L44,261" stroke="#111"/>
<path d="M13,284 C11,278 15,277 18,276 L23,270 L25,276 L22,284 Z M9,288 L23,288" fill="#eee" stroke="#222"/>
<rect x="37" y="275" width="13" height="12" fill="none" stroke="#111" stroke-dasharray="2 2.2"/><path d="M35,275 V287 L45,281Z" fill="#222"/>
<rect x="15" y="303" width="8" height="11" rx="1" fill="#ddd" stroke="#222"/><circle cx="19" cy="309" r="2" fill="none" stroke="#222"/><rect x="17" y="300" width="4" height="3" fill="#444"/><path d="M9,298 H10 M12,299 H13 M9,301 H10 M12,302 H13" stroke="#333"/>
<path d="M34,298 V312 H50" fill="none" stroke="#111"/><rect x="36" y="306" width="3.5" height="6" fill="#555"/><rect x="41" y="303" width="3.5" height="9" fill="#555"/><rect x="46" y="300" width="3.5" height="12" fill="#555"/>
<rect x="10" y="326" width="14" height="10" fill="#aaa" stroke="#111"/><path d="M10,331 C14,327 20,335 24,329 M15,326 C15,331 19,333 18,336" fill="none" stroke="#222"/>
<rect x="35" y="325" width="15" height="11" fill="url(#gr)" stroke="#222"/>
<path d="M10,360 L20,349 L23,352 L12,362Z" fill="#eee" stroke="#222"/><path d="M19,347 L23,344 L26,347 L23,351Z" fill="#222"/>
<rect x="33" y="343" width="6" height="6" fill="#aaa" stroke="#333"/><circle cx="46" cy="356" r="3.5" fill="#aaa" stroke="#333"/><path d="M39,349 L43,353" stroke="#555" stroke-dasharray="1 1"/>
<path d="M9,367 L13,364 L19,372 L15,375Z" fill="#ddd" stroke="#222"/><rect x="16" y="371" width="9" height="8" fill="#ddd" stroke="#111" stroke-width="1.3"/>
<rect x="37" y="365" width="10" height="10" fill="#ccc" stroke="#444"/><path d="M41,369 V380 L44,377.5 L48,379 L46,375 L49,374Z" fill="#fff" stroke="#111"/>
<rect x="12" y="393" width="11" height="11" fill="#eee" stroke="#111"/><path d="M9,393 H11 M9,404 H11 M24,393 H26 M24,404 H26" stroke="#555"/>
<path d="M33,405 L45,394 L50,390 L48,396 L37,407Z" fill="#555" stroke="#222"/><path d="M42,391 L50,400" stroke="#222"/>
<path d="M13,420 C10,414 13,413 14,417 L13,413 C13,411 16,411 16,413 V412 C16,410 19,410 19,412 L19,413 C20,411 22,412 22,414 V420 C22,424 20,427 18,427 H16 C14,427 14,424 13,420Z" fill="#fff" stroke="#222"/>
<circle cx="40" cy="416" r="5.5" fill="#ddd" stroke="#222"/><path d="M44,420 L50,426" stroke="#111" stroke-width="2.2"/>
<g fill="#222"><path d="M55,135 L52,135 L55,132Z"/><path d="M29,181 L26,181 L29,178Z"/><path d="M54,181 L51,181 L54,178Z"/><path d="M54,202 L51,202 L54,199Z"/><path d="M54,223 L51,223 L54,220Z"/><path d="M29,245 L26,245 L29,242Z"/><path d="M54,245 L51,245 L54,242Z"/><path d="M29,269 L26,269 L29,266Z"/><path d="M54,269 L51,269 L54,266Z"/><path d="M29,290 L26,290 L29,287Z"/><path d="M29,316 L26,316 L29,313Z"/><path d="M54,316 L51,316 L54,313Z"/><path d="M29,361 L26,361 L29,358Z"/><path d="M54,408 L51,408 L54,405Z"/><path d="M29,429 L26,429 L29,426Z"/></g>
<!-- colors -->
<path d="M45,440 L43,444 L47,444Z M41,443 C41,447 45,449 49,448" fill="#222" stroke="#222"/>
<rect x="22" y="450" width="28" height="28" fill="#1a1a1a" stroke="#fff"/><rect x="29" y="457" width="14" height="14" fill="#ddd" stroke="#fff"/>
<rect x="9" y="437" width="28" height="28" fill="#c4006a" stroke="#222" stroke-width="1.5"/><rect x="10.5" y="438.5" width="25" height="25" fill="none" stroke="#fff"/>
<rect x="15" y="470" width="6" height="6" fill="#222"/><rect x="11" y="467" width="6" height="6" fill="#fff" stroke="#222"/>
<rect x="5" y="487" width="50" height="16" fill="#eee" stroke="#7a7a7a"/><rect x="5" y="487" width="16" height="16" fill="#888"/>
<rect x="9" y="491" width="9" height="9" fill="#c4006a" stroke="#222"/>
<rect x="25" y="490" width="10" height="10" fill="url(#gr)" stroke="#222"/>
<rect x="41" y="490" width="10" height="10" fill="#fff" stroke="#222"/><path d="M41,500 L51,490" stroke="#e00020" stroke-width="1.8"/>
<path d="M21,487 V503 M38,487 V503" stroke="#999"/>
<rect x="5" y="507" width="50" height="16" fill="#eee" stroke="#7a7a7a"/>
<rect x="19" y="513" width="12" height="9" fill="#eee" stroke="#444"/><rect x="26" y="509" width="14" height="10" fill="#fff" stroke="#222"/>

<!-- transform panel -->
<path d="M.5,642 V529 Q.5,526.5 3,526.5 H127 Q129.5,526.5 129.5,529 V642Z" fill="#d5d5d5" stroke="#333"/>
<path d="M0,538 V529 Q0,526 3,526 H127 Q130,526 130,529 V538Z" fill="url(#dark)"/>
<circle cx="6.5" cy="532.5" r="3.5" fill="#999" stroke="#222"/>
<path d="M119,530 L122,532.5 L119,535Z M124,530 L127,532.5 L124,535Z" fill="#bbb"/>
<path d="M5,543.5 H124 M5,545 H124" stroke="#a8a8a8" stroke-dasharray="1 1"/>
<rect x="13" y="559" width="12" height="12" fill="#f4f4f4" stroke="#222" stroke-dasharray="3 1.5" stroke-width="1.5"/>
<text class="b" x="38" y="569" textLength="21">変形</text>
<path d="M12.5,587 V601" stroke="#222"/><rect x="14" y="589" width="9" height="5" fill="#777"/><rect x="14" y="595" width="13" height="5" fill="#222"/>
<text class="b" x="38" y="599" textLength="21">整列</text>
<rect x="11" y="617" width="9" height="9" fill="#666"/><rect x="17" y="623" width="9" height="9" fill="#222"/><rect x="17" y="623" width="3" height="3" fill="#ddd"/>
<text class="b" x="37" y="629" textLength="77">パスファインダ</text>

<!-- right dock -->
<rect x="1245" y="86" width="35" height="514" fill="#d5d5d5"/>
<rect x="1245" y="86" width="1" height="514" fill="#666"/>
<rect x="1245" y="86" width="35" height="12" fill="url(#dark)"/>
<path d="M1271,90 L1268,92 L1271,94Z M1276,90 L1273,92 L1276,94Z" fill="#bbb"/>
<path d="M1249,104 H1276 M1249,178 H1276 M1249,282 H1276 M1249,386 H1276 M1249,489 H1276 M1249,563 H1276" stroke="#a4a4a4" stroke-dasharray="1 1"/>
<path d="M1245,172.5 H1280 M1245,276.5 H1280 M1245,380.5 H1280 M1245,484.5 H1280 M1245,558.5 H1280" stroke="#8a8a8a"/>
<path d="M1254,128 C1252,120 1262,116 1270,118 C1274,119 1273,123 1270,125 C1267,126 1268,129 1265,130.5 C1260,133 1255,132 1254,128Z" fill="#222"/>
<circle cx="1258" cy="125" r="1.4" fill="#ddd"/><circle cx="1262" cy="121" r="1.4" fill="#ddd"/><circle cx="1267" cy="121" r="1.4" fill="#ddd"/><circle cx="1260" cy="129" r="1.4" fill="#ddd"/>
<path d="M1255,147 V162 H1271 C1270,154 1263,148 1255,147Z" fill="#888" stroke="#111"/><path d="M1255,162 L1268,152 L1264,148Z" fill="#555"/>
<rect x="1254" y="192" width="17" height="13" fill="#333"/><path d="M1254,196 H1271 M1254,200 H1271 M1259,192 V205 M1264,192 V205" stroke="#ccc" stroke-width=".8"/>
<rect x="1259" y="228" width="8" height="8" fill="#fff" stroke="#111" stroke-width="1.4"/><path d="M1261,228 L1258,219 M1264,228 L1264,218 M1265,228 L1269,220" stroke="#222" stroke-width="2.2"/>
<path d="M1263,251 C1266,251 1267,254 1266,256 C1270,255 1271,259 1269,261 C1267,263 1265,262 1264,260 L1266,265 H1260 L1262,260 C1261,262 1258,263 1256,261 C1254,259 1256,255 1260,256 C1259,254 1260,251 1263,251Z" fill="#222"/>
<path d="M1254,296 H1271" stroke="#444" stroke-dasharray="2 1"/><rect x="1254" y="299" width="17" height="2" fill="#333"/><rect x="1254" y="304" width="17" height="4" fill="#222"/>
<rect x="1254.5" y="327" width="17" height="12" fill="url(#gr)" stroke="#222"/>
<circle cx="1260" cy="360" r="6" fill="#444"/><circle cx="1265" cy="365" r="6" fill="#ccc" fill-opacity=".7" stroke="#444"/>
<text x="1256" y="414" style="font-size:16px;fill:#222">A</text><rect x="1268" y="399" width="1" height="16" fill="#111"/>
<text x="1257" y="442" style="font-size:15px;font-weight:bold;fill:#333">¶</text>
<text x="1254" y="470" style="font-size:14px;font-style:italic;font-family:'Liberation Serif';fill:#222">O</text><text x="1264" y="473" style="font-size:12px;font-weight:bold;font-family:'Liberation Serif';fill:#222">T</text>
<circle cx="1262.5" cy="510" r="8" fill="#fff" stroke="#777" stroke-dasharray="1.5 1"/><circle cx="1262.5" cy="510" r="6" fill="#444"/>
<rect x="1258" y="533" width="13" height="13" fill="#fff" stroke="#222"/><rect x="1255" y="541" width="6" height="6" fill="#fff" stroke="#222"/><rect x="1258" y="544" width="5" height="5" fill="#fff" stroke="#222"/>
<rect x="1249.5" y="570.5" width="28" height="27" rx="2" fill="#8a8a8a" stroke="#555"/>
<path d="M1263.5,581 L1273,586 L1263.5,591 L1254,586Z" fill="#222"/>
<path d="M1263.5,575 L1273,580.5 L1263.5,586 L1254,580.5Z" fill="#eee"/>
<rect x="1245" y="600" width="3" height="180" fill="#000"/>
<rect x="1248" y="600" width="18" height="180" fill="url(#cy2)"/>
<rect x="1266" y="600" width="14" height="180" fill="url(#sv)"/>
<rect x="1266" y="762" width="14" height="18" fill="#f2f2f2"/><path d="M1269,768 H1277 L1273,775Z" fill="#888"/>
<rect x="1245" y="780" width="35" height="16" fill="#c0c0c0"/>
<path d="M1269,793 L1278,784 M1273,793 L1278,788 M1277,793 L1278,792" stroke="#777"/>

<!-- swatches panel -->
<rect x="813.5" y="623.5" width="215" height="129" fill="#d5d5d5" stroke="#888"/>
<rect x="814" y="623" width="215" height="4" fill="#444"/>
<rect x="814" y="627" width="215" height="17" fill="url(#lay)"/>
<rect x="815" y="628" width="145" height="17" fill="#d8d8d8"/>
<text x="821" y="640" style="font-size:11px;fill:#222" textLength="136">ガーリーテイスト(作GR…</text>
<path d="M988,632 L992,635.5 L988,639Z M993,632 L997,635.5 L993,639Z" fill="#444"/><path d="M1004.5,631 V640" stroke="#888"/>
<path d="M1010,634 H1014 L1012,637Z" fill="#222"/><path d="M1015,632.5 H1025 M1015,635.5 H1025 M1015,638.5 H1025" stroke="#222"/>
<g clip-path="url(#sw)">
<rect x="816" y="646" width="196" height="91" fill="#d5d5d5"/>
<rect x="816" y="646" width="14" height="91" fill="#e4e4e4"/>
<rect x="830" y="646" width="14" height="13" fill="#fff"/><rect x="831" y="647" width="12" height="11" fill="#e08080" stroke="#111"/>
<rect x="844" y="646" width="14" height="13" fill="#6e3528"/><rect x="858" y="646" width="14" height="13" fill="#dc6b68"/><rect x="872" y="646" width="14" height="13" fill="#f6d9a0"/><rect x="886" y="646" width="13" height="13" fill="#a87425"/>
<rect x="830" y="660" width="14" height="13" fill="#f1e6d0"/><rect x="844" y="660" width="14" height="13" fill="#7fa58c"/><rect x="858" y="660" width="14" height="13" fill="#f8dc6e"/><rect x="872" y="660" width="14" height="13" fill="#edb9a5"/><rect x="886" y="660" width="13" height="13" fill="#84c49a"/>
<rect x="830" y="674" width="14" height="13" fill="#d6e040"/><rect x="844" y="674" width="14" height="13" fill="#f0b412"/><rect x="858" y="674" width="14" height="13" fill="#e8bc82"/><rect x="872" y="674" width="14" height="13" fill="#d2e59a"/><rect x="886" y="674" width="13" height="13" fill="#b690c4"/>
<rect x="830" y="688" width="14" height="13" fill="#e89cba"/><rect x="844" y="688" width="14" height="13" fill="#92ceaa"/><rect x="858" y="688" width="14" height="13" fill="#e8e412"/><rect x="872" y="688" width="14" height="13" fill="#30a8a0"/><rect x="886" y="688" width="13" height="13" fill="#e08088"/>
<rect x="830" y="702" width="14" height="13" fill="#f8f400"/><rect x="844" y="702" width="14" height="13" fill="#9c5aa0"/><rect x="858" y="702" width="14" height="13" fill="#de64a4"/><rect x="872" y="702" width="14" height="13" fill="#7254a0"/><rect x="886" y="702" width="13" height="13" fill="#bcd600"/>
<rect x="830" y="716" width="14" height="13" fill="#88b8f0"/><rect x="844" y="716" width="14" height="13" fill="#e07808"/><rect x="858" y="716" width="14" height="13" fill="#0ea4f0"/><rect x="872" y="716" width="14" height="13" fill="#fff400"/><rect x="886" y="716" width="13" height="13" fill="#d02a84"/>
<rect x="830" y="730" width="14" height="8" fill="#c4006a"/><rect x="844" y="730" width="14" height="8" fill="#140808"/><rect x="858" y="730" width="14" height="8" fill="#c81478"/><rect x="872" y="730" width="14" height="8" fill="#5a006e"/><rect x="886" y="730" width="13" height="8" fill="#1a1a1a"/>
<path d="M816,659.5 H899 M816,673.5 H899 M816,687.5 H899 M816,701.5 H899 M816,715.5 H899 M816,729.5 H899 M899.5,646 V737" stroke="#111"/>
<g fill="#c8c8c8" stroke="#555" stroke-width=".9">
<path d="M817.5,651 L819.500,649 H824 L826,651 H828.5 V657.5 H817.5Z"/><path d="M817.5,665 L819.500,663 H824 L826,665 H828.5 V671.5 H817.5Z"/><path d="M817.5,679 L819.500,677 H824 L826,679 H828.5 V685.5 H817.5Z"/><path d="M817.5,693 L819.500,691 H824 L826,693 H828.5 V699.5 H817.5Z"/><path d="M817.5,707 L819.500,705 H824 L826,707 H828.5 V713.5 H817.5Z"/><path d="M817.5,721 L819.500,719 H824 L826,721 H828.5 V727.5 H817.5Z"/><path d="M817.5,735 L819.500,733 H824 L826,735 H828.5 V741.5 H817.5Z"/>
</g>
</g>
<rect x="1012" y="646" width="13" height="91" fill="url(#sv)"/>
<rect x="1012" y="646" width="13" height="14" fill="#f4f4f4"/>
<path d="M1018.5,651 L1022,656 H1015Z" fill="#222"/>
<rect x="1012" y="725" width="13" height="12" fill="#f4f4f4"/><path d="M1015,727 H1022 L1018.5,732Z" fill="#222"/>
<rect x="1012" y="662" width="13" height="20" rx="5" fill="url(#knob)" stroke="#0a3c90"/><rect x="1015" y="665" width="7" height="13" rx="3" fill="#6aa8f2" opacity=".7"/>
<rect x="814" y="737" width="214" height="15" fill="#e6e6e6"/>
<path d="M814,736.5 H1028" stroke="#999"/>
<path d="M846.5,737 V752 M877.5,737 V752 M908.5,737 V752" stroke="#999"/>
<rect x="824" y="739" width="9" height="9" fill="#ccc" stroke="#333"/><rect x="827" y="741" width="9" height="9" fill="#aaa" stroke="#222"/>
<path d="M866,740 V749 L857,744.5Z M888,740 V749 L897,744.5Z" fill="#555"/>
<path d="M992,739 L1003,750 M1003,739 L992,750" stroke="#d00" stroke-width="1"/>
<path d="M998,738 L996,744 L993,750 M998,742 L1002,746" stroke="#111" stroke-width="1.4"/>
<g fill="#999"><rect x="1024" y="745" width="1" height="1"/><rect x="1022" y="747" width="1" height="1"/><rect x="1024" y="747" width="1" height="1"/><rect x="1020" y="749" width="1" height="1"/><rect x="1022" y="749" width="1" height="1"/><rect x="1024" y="749" width="1" height="1"/></g>

<!-- layers panel -->
<rect x="1029.5" y="567.5" width="215" height="139" fill="#d5d5d5" stroke="#888"/>
<rect x="1030" y="567" width="215" height="4" fill="#444"/>
<rect x="1030" y="571" width="214" height="16" fill="url(#lay)"/>
<rect x="1031" y="570" width="56" height="18" fill="#dcdcdc"/>
<text x="1038" y="583" style="font-size:11px;fill:#222" textLength="43">レイヤー</text>
<path d="M1204,575 L1208,579 L1204,583Z M1209,575 L1213,579 L1209,583Z" fill="#444"/><path d="M1220.5,575 V584" stroke="#888"/>
<path d="M1226,578 H1230 L1228,581Z" fill="#222"/><path d="M1231,576 H1241 M1231,579 H1241 M1231,582 H1241" stroke="#222"/>
<path d="M1032,608.5 H1228 M1032,628.5 H1228 M1032,648.5 H1228 M1032,668.5 H1228" stroke="#fff" stroke-width="1.5"/>
<path d="M1032,588.5 H1228" stroke="#222"/>
<rect x="1093" y="669" width="135" height="20" fill="#b4d2fc"/>
<path d="M1222,671 H1227 V676Z" fill="#111"/>
<rect x="1076" y="588" width="1.5" height="101" fill="#111"/>
<rect x="1033" y="590" width="16" height="17" fill="#e6e6e6"/><rect x="1033" y="610" width="16" height="17" fill="#e6e6e6"/><rect x="1033" y="630" width="16" height="17" fill="#e6e6e6"/><rect x="1033" y="650" width="16" height="17" fill="#e6e6e6"/><rect x="1033" y="670" width="16" height="17" fill="#e6e6e6"/>
<rect x="1052" y="590" width="13" height="17" fill="#e6e6e6"/><rect x="1052" y="610" width="13" height="17" fill="#e6e6e6"/><rect x="1052" y="630" width="13" height="17" fill="#e6e6e6"/><rect x="1052" y="650" width="13" height="17" fill="#e6e6e6"/><rect x="1052" y="670" width="13" height="17" fill="#d8d8d8" stroke="#aaa"/>
<g fill="#222"><path d="M1034,598.5 C1039,592 1043,592 1048,598.5 C1043,605 1039,605 1034,598.5Z M1034,618.5 C1039,612 1043,612 1048,618.5 C1043,625 1039,625 1034,618.5Z M1034,638.5 C1039,632 1043,632 1048,638.5 C1043,645 1039,645 1034,638.5Z M1034,658.5 C1039,652 1043,652 1048,658.5 C1043,665 1039,665 1034,658.5Z M1034,678.5 C1039,672 1043,672 1048,678.5 C1043,685 1039,685 1034,678.5Z"/></g>
<g fill="#ccc"><circle cx="1041" cy="598.5" r="3"/><circle cx="1041" cy="618.5" r="3"/><circle cx="1041" cy="638.5" r="3"/><circle cx="1041" cy="658.5" r="3"/><circle cx="1041" cy="678.5" r="3"/></g>
<g fill="#111"><circle cx="1041" cy="598.5" r="1.7"/><circle cx="1041" cy="618.5" r="1.7"/><circle cx="1041" cy="638.5" r="1.7"/><circle cx="1041" cy="658.5" r="1.7"/><circle cx="1041" cy="678.5" r="1.7"/></g>
<g fill="#222"><rect x="1054" y="598" width="9" height="7"/><rect x="1054" y="618" width="9" height="7"/><rect x="1054" y="638" width="9" height="7"/><rect x="1054" y="658" width="9" height="7"/></g>
<g fill="none" stroke="#222" stroke-width="1.3"><path d="M1056,598 V595 C1056,592.5 1061,592.5 1061,595 V598 M1056,618 V615 C1056,612.5 1061,612.5 1061,615 V618 M1056,638 V635 C1056,632.5 1061,632.5 1061,635 V638 M1056,658 V655 C1056,652.5 1061,652.5 1061,655 V658"/></g>
<rect x="1068" y="592" width="4" height="14" fill="#ff5858"/><rect x="1068" y="612" width="4" height="14" fill="#5858ff"/><rect x="1068" y="632" width="4" height="14" fill="#ffff50"/><rect x="1068" y="652" width="4" height="14" fill="#ff58f0"/><rect x="1068" y="672" width="4" height="14" fill="#58ffff"/>
<path d="M1082,594 L1090,599 L1082,604Z M1082,614 L1090,619 L1082,624Z M1082,634 L1090,639 L1082,644Z M1082,654 L1090,659 L1082,664Z" fill="#777"/>
<g fill="#fff" stroke="#111"><rect x="1094.5" y="591.5" width="16" height="15"/><rect x="1094.5" y="611.5" width="16" height="15"/><rect x="1094.5" y="631.5" width="16" height="15"/><rect x="1094.5" y="651.5" width="16" height="15"/><rect x="1094.5" y="671.5" width="16" height="15"/></g>
<ellipse cx="1102" cy="598" rx="6" ry="5" fill="#109fea" stroke="#111"/><path d="M1096,594 L1099,596 M1108,594 L1105,596" stroke="#003560" stroke-width="2"/><rect x="1100" y="603" width="6" height="3" fill="#109fea"/>
<ellipse cx="1102" cy="619" rx="6" ry="5" fill="#111"/><path d="M1096,618 C1096,613 1100,614 1100,617 M1108,618 C1108,613 1104,614 1104,617" stroke="#c00008" stroke-width="2" fill="none"/><rect x="1099" y="624" width="7" height="2" fill="#111"/>
<ellipse cx="1102" cy="640" rx="5" ry="4" fill="#c4006a" stroke="#111" stroke-width=".8"/><path d="M1096,633 L1099,637 M1109,633 L1106,637" stroke="#e08488" stroke-width="2"/><rect x="1101" y="644" width="4" height="2.5" fill="#c4006a"/>
<path d="M1095,652 L1099,656" stroke="#666" stroke-width="1.5"/><ellipse cx="1104" cy="662" rx="4" ry="3" fill="#41cbc5" stroke="#111"/>
<g fill="none" stroke="#555"><circle cx="1208.5" cy="598.5" r="4"/><circle cx="1208.5" cy="618.5" r="4"/><circle cx="1208.5" cy="638.5" r="4"/><circle cx="1208.5" cy="658.5" r="4"/><circle cx="1208.5" cy="678.5" r="4"/></g>
<text class="l" x="1115" y="601" textLength="52">ネイビルくん</text>
<text class="l" x="1115" y="621" textLength="52">ベリアルさん</text>
<text class="l" x="1115" y="641" textLength="52">フルフルくん</text>
<text class="l" x="1115" y="661" textLength="71">スリーピィちゃん</text>
<text class="l" x="1115" y="681" textLength="44">レイヤー 7</text>
<rect x="1228" y="589" width="14" height="100" fill="url(#sv)"/>
<rect x="1228" y="589" width="14" height="14" fill="#f4f4f4"/><path d="M1235,593 L1238.5,598 H1231.5Z" fill="#222"/>
<rect x="1228" y="675" width="14" height="14" fill="#f4f4f4"/><path d="M1231.5,679 H1238.5 L1235,684Z" fill="#222"/>
<rect x="1228.5" y="653" width="13" height="20" rx="5" fill="url(#knob)" stroke="#0a3c90"/><rect x="1231.5" y="656" width="7" height="13" rx="3" fill="#6aa8f2" opacity=".7"/>
<rect x="1030" y="690" width="214" height="15" fill="#ececec"/>
<rect x="1030" y="690" width="73" height="15" fill="#d5d5d5"/>
<text class="s" x="1041" y="699" textLength="42" style="fill:#222">7レイヤー</text>
<path d="M1103.5,690 V705 M1134.5,690 V705 M1166.5,690 V705 M1197.5,690 V705" stroke="#999"/>
<rect x="1113" y="692" width="7" height="7" fill="none" stroke="#888" stroke-dasharray="1 1"/><circle cx="1119" cy="698" r="4" fill="#ddd" stroke="#666"/>
<path d="M1142,695 H1147 M1147,693 L1150,695 L1147,697" stroke="#222" fill="none"/><rect x="1150" y="695" width="7" height="7" fill="#fff" stroke="#222"/>
<rect x="1176" y="694" width="9" height="8" fill="#fff" stroke="#222"/><rect x="1180" y="698" width="3" height="3" fill="#222"/>
<rect x="1208" y="695" width="8" height="8" rx="1" fill="#fff" stroke="#222"/><path d="M1207,693.5 H1217" stroke="#222" stroke-width="1.5"/><path d="M1210,696 V701 M1212,696 V701 M1214,696 V701" stroke="#555"/>
<g fill="#999"><rect x="1240" y="699" width="1" height="1"/><rect x="1238" y="701" width="1" height="1"/><rect x="1240" y="701" width="1" height="1"/><rect x="1236" y="703" width="1" height="1"/><rect x="1238" y="703" width="1" height="1"/><rect x="1240" y="703" width="1" height="1"/></g>
</svg>
</body></html>
